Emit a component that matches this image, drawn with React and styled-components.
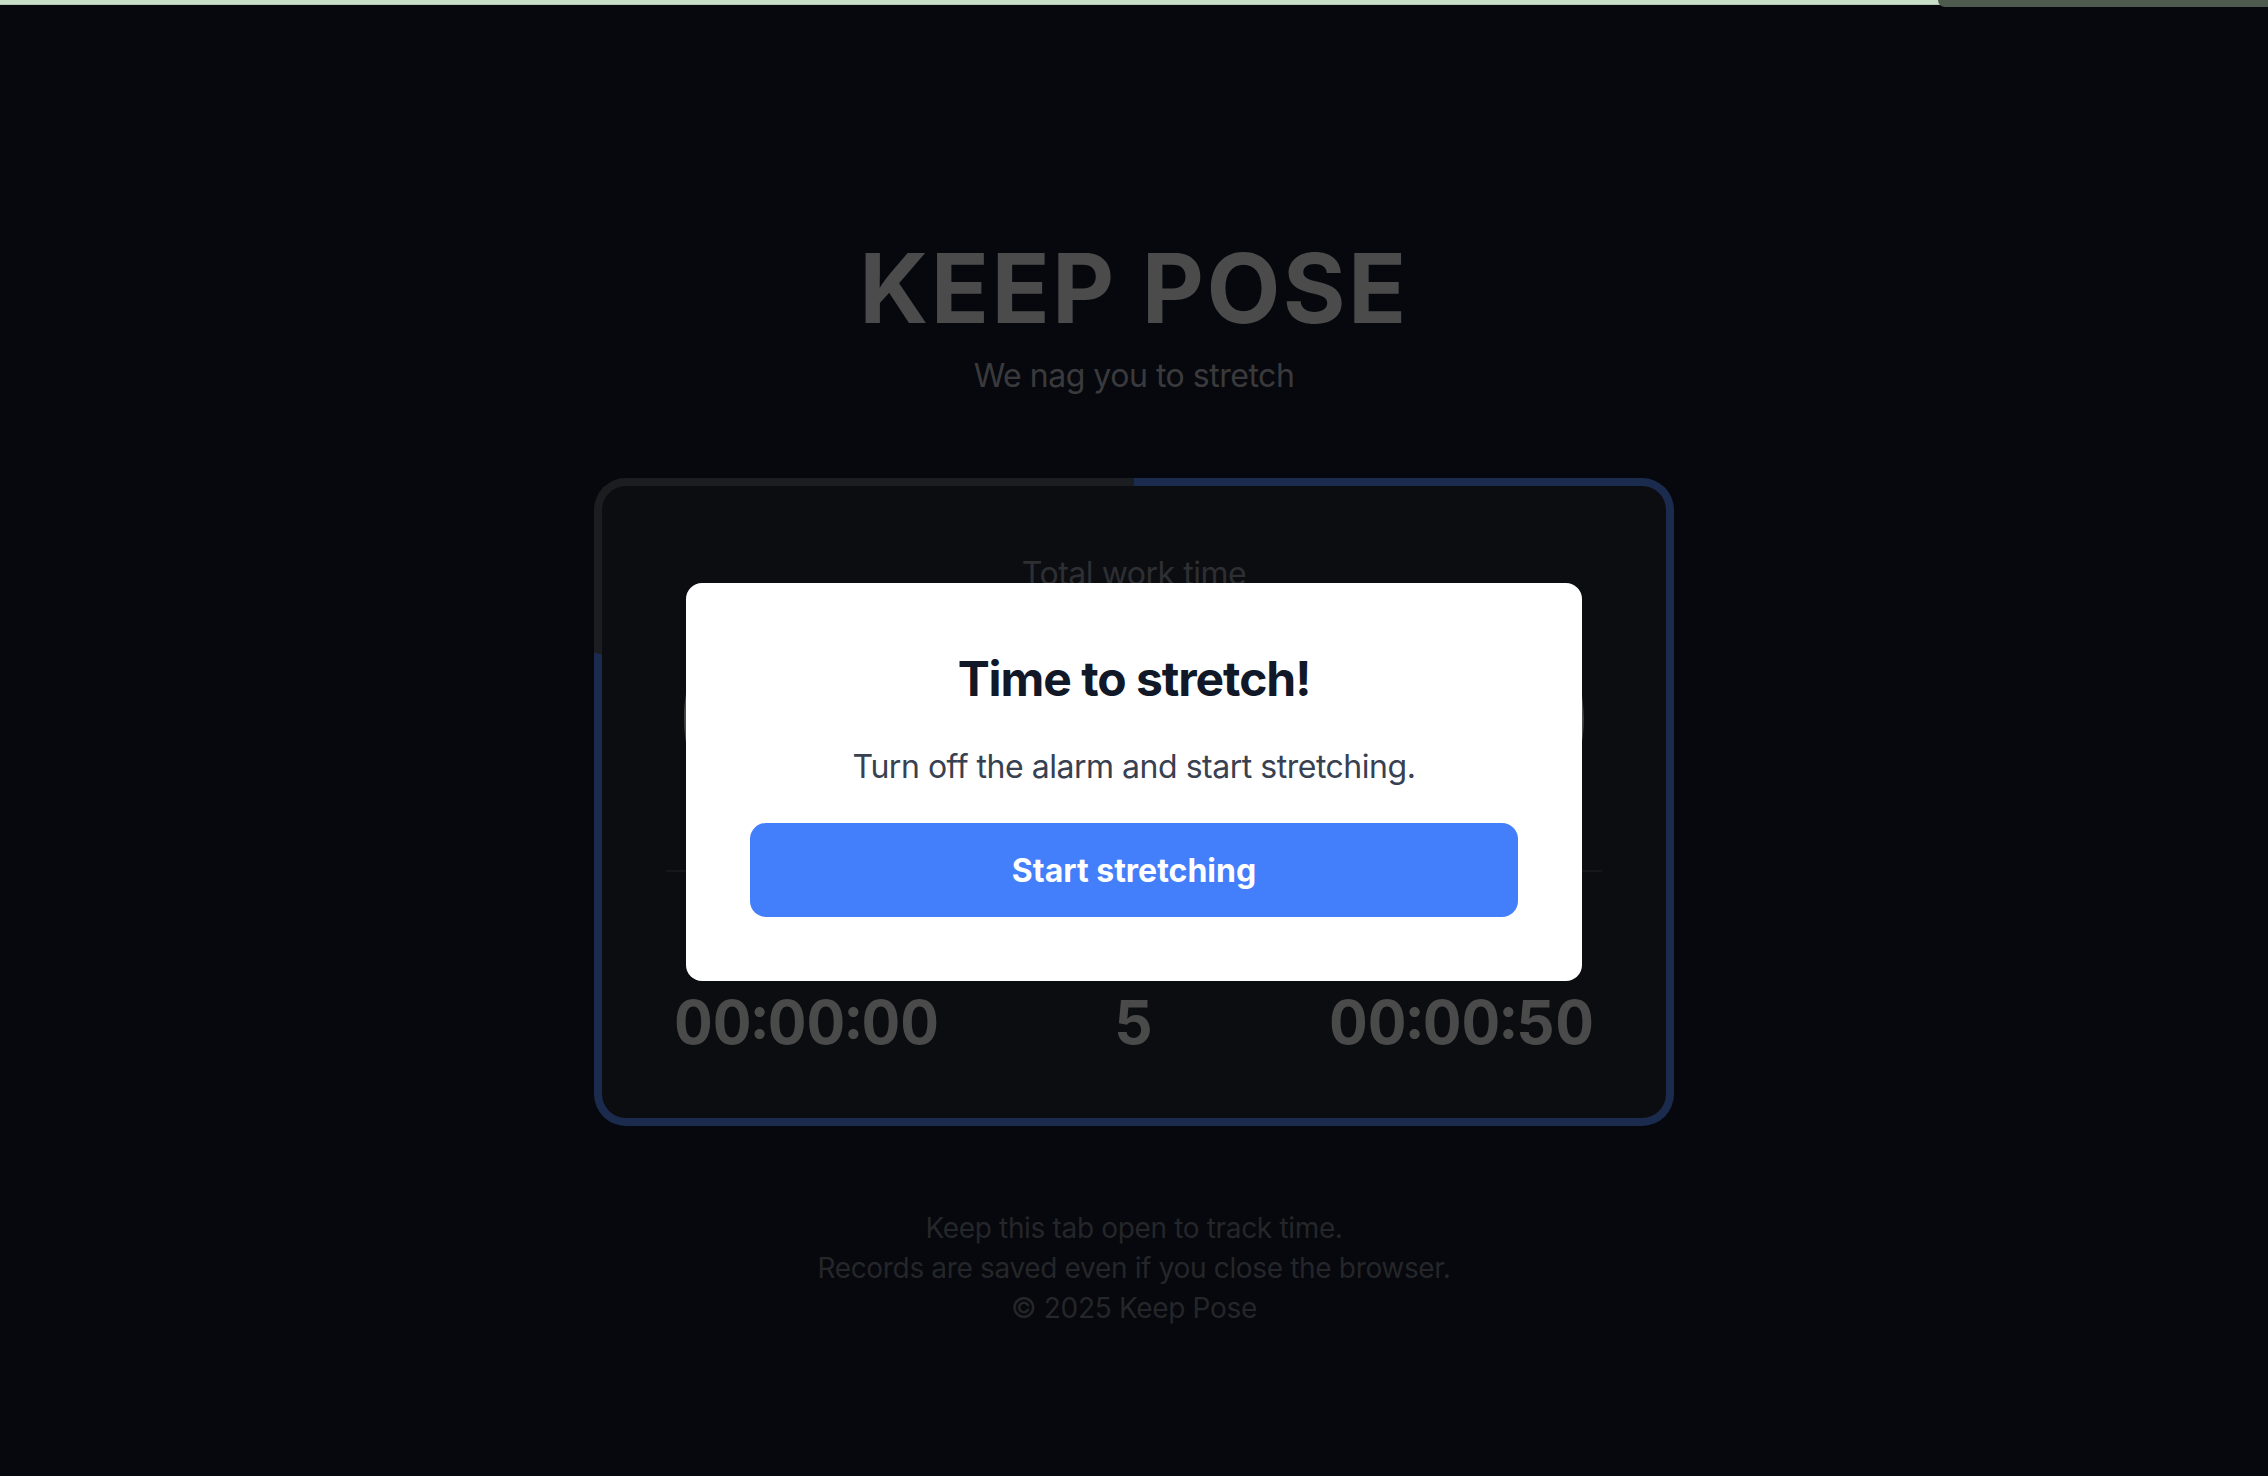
import React from "react";
import styled, { createGlobalStyle } from "styled-components";

const GlobalStyle = createGlobalStyle`
  * {
    box-sizing: border-box;
  }
  html,
  body {
    margin: 0;
    padding: 0;
    background: #0c101a;
  }
  body {
    font-family: Inter, "Noto Sans", "Liberation Sans", sans-serif;
    -webkit-font-smoothing: antialiased;
  }
`;

const WindowEdge = styled.div`
  position: fixed;
  top: 0;
  left: 0;
  right: 0;
  height: 5px;
  background: #c9dec6;
  border-bottom: 1px solid #b4c5b2;
  z-index: 30;
`;

const EdgeTab = styled.div`
  position: absolute;
  top: 0;
  right: 0;
  width: 330px;
  height: 7px;
  background: #4f5a4f;
  border-bottom-left-radius: 12px;
`;

const Page = styled.main`
  min-height: 100vh;
  display: flex;
  flex-direction: column;
  align-items: center;
  padding-top: 240px;
`;

const Title = styled.h1`
  margin: 0;
  font-size: 96px;
  line-height: 96px;
  font-weight: 700;
  letter-spacing: 0.025em;
  color: #969696;
`;

const Tagline = styled.p`
  margin: 16px 0 0;
  font-size: 32px;
  line-height: 48px;
  letter-spacing: -0.015em;
  color: #74757b;
`;

const ProgressFrame = styled.section`
  margin-top: 78px;
  width: 1080px;
  padding: 8px;
  border-radius: 32px;
  background: conic-gradient(
    #36569c 0 ${(p) => p.$progress}%,
    #383b42 ${(p) => p.$progress}% 100%
  );
`;

const Card = styled.div`
  border-radius: 24px;
  background: #161a22;
  padding: 64px 64px 60px;
  display: flex;
  flex-direction: column;
  align-items: center;
`;

const CardLabel = styled.div`
  font-size: 32px;
  line-height: 48px;
  letter-spacing: -0.015em;
  color: #5c5e66;
`;

const BigTimer = styled.div`
  margin-top: 16px;
  font-size: 208px;
  line-height: 208px;
  font-weight: 700;
  color: #949494;
  font-variant-numeric: tabular-nums;
`;

const Stats = styled.div`
  margin-top: 48px;
  width: 100%;
  border-top: 2px solid #2a2e36;
  padding: 32px 8px 0;
  display: flex;
  justify-content: space-between;
`;

const Stat = styled.div`
  display: flex;
  flex-direction: column;
  align-items: center;
`;

const StatLabel = styled.span`
  font-size: 28px;
  line-height: 40px;
  color: #5c5e66;
`;

const StatValue = styled.span`
  margin-top: 42px;
  font-size: 60px;
  line-height: 72px;
  font-weight: 700;
  color: #949494;
  font-variant-numeric: tabular-nums;
`;

const Footer = styled.footer`
  margin-top: 82px;
  text-align: center;
  font-size: 28px;
  line-height: 40px;
  letter-spacing: -0.012em;
  color: #4a4c53;

  p {
    margin: 0;
  }
`;

const Overlay = styled.div`
  position: fixed;
  inset: 0;
  background: rgba(0, 0, 0, 0.5);
  display: flex;
  align-items: center;
  justify-content: center;
  padding-top: 88px;
  z-index: 20;
`;

const Modal = styled.div`
  width: 896px;
  background: #ffffff;
  border-radius: 16px;
  padding: 64px;
  text-align: center;
`;

const ModalTitle = styled.h2`
  margin: 0;
  font-size: 48px;
  line-height: 64px;
  font-weight: 700;
  letter-spacing: -0.022em;
  color: #111827;
`;

const ModalText = styled.p`
  margin: 32px 0 0;
  font-size: 32px;
  line-height: 48px;
  letter-spacing: -0.015em;
  color: #374151;
`;

const PrimaryButton = styled.button`
  margin-top: 32px;
  width: 100%;
  height: 94px;
  border: none;
  border-radius: 16px;
  background: #447ffb;
  color: #ffffff;
  font-family: inherit;
  font-size: 32px;
  font-weight: 700;
  cursor: pointer;
`;

const stats = [
  { label: "Session", value: "00:00:00" },
  { label: "Stretches", value: "5" },
  { label: "Next", value: "00:00:50" },
];

export default function App() {
  return (
    <>
      <GlobalStyle />
      <WindowEdge>
        <EdgeTab />
      </WindowEdge>
      <Page>
        <Title>KEEP POSE</Title>
        <Tagline>We nag you to stretch</Tagline>
        <ProgressFrame $progress={79.3}>
          <Card>
            <CardLabel>Total work time</CardLabel>
            <BigTimer>00:00:50</BigTimer>
            <Stats>
              {stats.map((s) => (
                <Stat key={s.label}>
                  <StatLabel>{s.label}</StatLabel>
                  <StatValue>{s.value}</StatValue>
                </Stat>
              ))}
            </Stats>
          </Card>
        </ProgressFrame>
        <Footer>
          <p>Keep this tab open to track time.</p>
          <p>Records are saved even if you close the browser.</p>
          <p>© 2025 Keep Pose</p>
        </Footer>
      </Page>
      <Overlay>
        <Modal>
          <ModalTitle>Time to stretch!</ModalTitle>
          <ModalText>Turn off the alarm and start stretching.</ModalText>
          <PrimaryButton>Start stretching</PrimaryButton>
        </Modal>
      </Overlay>
    </>
  );
}
